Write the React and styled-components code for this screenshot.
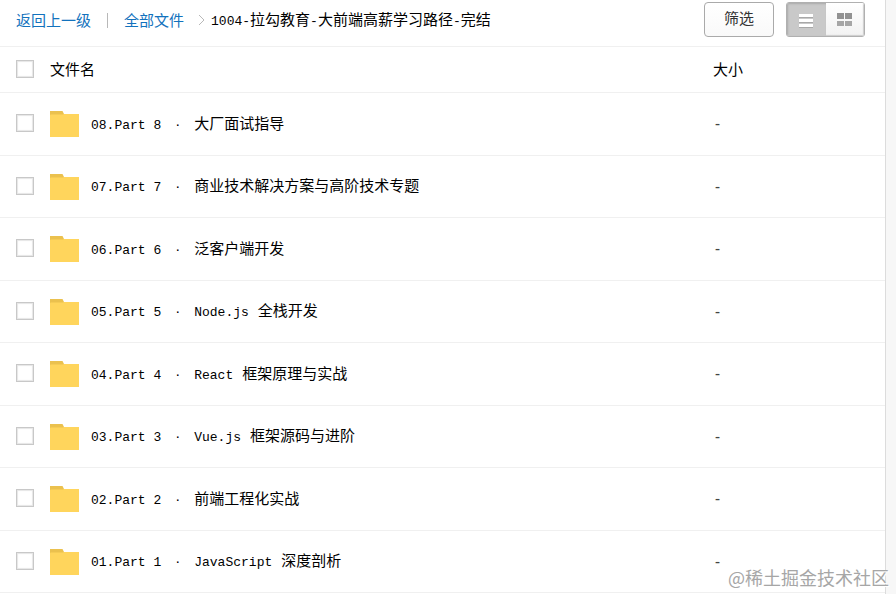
import { useState } from "react";
import styled, { createGlobalStyle } from "styled-components";

const folders = [
  { id: "08.Part 8", title: "大厂面试指导" },
  { id: "07.Part 7", title: "商业技术解决方案与高阶技术专题" },
  { id: "06.Part 6", title: "泛客户端开发" },
  { id: "05.Part 5", tech: "Node.js", title: "全栈开发" },
  { id: "04.Part 4", tech: "React", title: "框架原理与实战" },
  { id: "03.Part 3", tech: "Vue.js", title: "框架源码与进阶" },
  { id: "02.Part 2", title: "前端工程化实战" },
  { id: "01.Part 1", tech: "JavaScript", title: "深度剖析" },
];

const FolderIcon = () => (
  <svg width="30" height="28" viewBox="0 0 30 28" aria-hidden="true">
    <path d="M0 1h12.500l1.500 3v3H0z" fill="#ebc14e" />
    <path d="M0 5.500Q0 4.500 1 4.500h12l1-.5h15v23H0z" fill="#ffd55c" />
  </svg>
);

const App = () => {
  const [view, setView] = useState("list");
  return (
    <>
      <GlobalStyle />
      <Page>
        <Panel>
          <Toolbar>
            <Crumbs aria-label="路径">
              <CrumbLink href="#up">返回上一级</CrumbLink>
              <Divider />
              <CrumbLink href="#all">全部文件</CrumbLink>
              <Arrow viewBox="0 0 8 12" aria-hidden="true">
                <path d="M1 1l5 5-5 5" fill="none" stroke="#b8b8b8" />
              </Arrow>
              <span>
                <Latin>1004-</Latin>拉勾教育<Latin>-</Latin>
                大前端高薪学习路径<Latin>-</Latin>完结
              </span>
            </Crumbs>
            <FilterButton type="button">筛选</FilterButton>
            <ViewSwitch>
              <ViewButton
                type="button"
                aria-label="列表"
                $active={view === "list"}
                onClick={() => setView("list")}
              >
                <svg width="16" height="16" viewBox="0 0 16 16">
                  <path d="M1 4.500h14M1 9.500h14M1 14.500h14" stroke="#a8a8a8" strokeWidth="3" />
                  <path d="M1 3.500h14M1 8.500h14M1 13.500h14" stroke="#fff" strokeWidth="3" />
                </svg>
              </ViewButton>
              <ViewButton
                type="button"
                aria-label="缩略图"
                $active={view === "grid"}
                onClick={() => setView("grid")}
              >
                <svg width="16" height="16" viewBox="0 0 16 16">
                  <path d="M0 1h7v6H0zM8 1h7v6H8z" fill="#929292" />
                  <path d="M0 9h7v5H0zM8 9h7v5H8z" fill="#a6a6a6" />
                </svg>
              </ViewButton>
            </ViewSwitch>
          </Toolbar>
          <FileTable>
            <thead>
              <HeadRow>
                <CheckHead>
                  <Checkbox type="checkbox" aria-label="全选" />
                </CheckHead>
                <Head>文件名</Head>
                <SizeHead>大小</SizeHead>
              </HeadRow>
            </thead>
            <tbody>
              {folders.map(({ id, tech, title }) => (
                <Row key={id}>
                  <CheckCell>
                    <Checkbox type="checkbox" aria-label={id} />
                  </CheckCell>
                  <Cell>
                    <FileLink href="#folder">
                      <FolderIcon />
                      <FileName>
                        <Latin>{id}</Latin>
                        <Dot>·</Dot>
                        {tech && <Tech>{tech}</Tech>}
                        {title}
                      </FileName>
                    </FileLink>
                  </Cell>
                  <SizeCell>-</SizeCell>
                </Row>
              ))}
            </tbody>
          </FileTable>
        </Panel>
        <Watermark>@稀土掘金技术社区</Watermark>
      </Page>
    </>
  );
};

export default App;

const GlobalStyle = createGlobalStyle`
  * {
    box-sizing: border-box;
  }
  body {
    margin: 0;
    color: #000;
    font-family: "Noto Sans CJK SC", sans-serif;
    font-size: 15px;
    line-height: 20px;
  }
  a {
    text-decoration: none;
  }
`;

const Page = styled.div`
  position: relative;
  min-height: 100vh;
  display: flex;
  padding-right: 10px;
  background: #f7f7f7;
`;

const Panel = styled.main`
  flex: 1;
  min-width: 0;
  background: #fff;
  border-right: 1px solid #dcdcdc;
`;

const Toolbar = styled.header`
  display: flex;
  align-items: flex-start;
  height: 47px;
  padding: 2px 20px 0 16px;
  border-bottom: 1px solid #f0f0f0;
`;

const Crumbs = styled.nav`
  flex: 1;
  display: flex;
  align-items: center;
  height: 36px;
  white-space: nowrap;
`;

const CrumbLink = styled.a`
  color: #1272bd;
`;

const Divider = styled.span`
  width: 1px;
  height: 15px;
  margin: 0 16px;
  background: #b8b8b8;
`;

const Arrow = styled.svg`
  width: 8px;
  height: 12px;
  margin: 0 5px 0 14px;
`;

const Latin = styled.span`
  font-family: "Liberation Mono", monospace;
  font-size: 13px;
`;

const FilterButton = styled.button`
  width: 70px;
  height: 35px;
  padding: 0 0 3px;
  border: 1px solid #aaa;
  border-radius: 4px;
  background: linear-gradient(#fff, #f9f9f9);
  color: #333;
  font: inherit;
  cursor: pointer;
`;

const ViewSwitch = styled.div`
  display: flex;
  width: 79px;
  height: 35px;
  margin-left: 12px;
  border: 1px solid #b0b0b0;
  border-radius: 3px;
  overflow: hidden;
`;

const ViewButton = styled.button`
  flex: 1;
  display: flex;
  align-items: center;
  justify-content: center;
  padding: 0;
  border: 0;
  background: ${(props) =>
    props.$active ? "#c9c9c9" : "linear-gradient(#fff, #f2f2f2)"};
  box-shadow: ${(props) =>
    props.$active ? "inset 1px 1px 2px #aaa" : "inset -1px -1px 1px #ccc"};
  cursor: pointer;
`;

const FileTable = styled.table`
  width: 100%;
  table-layout: fixed;
  border-collapse: separate;
  border-spacing: 0;
`;

const Cell = styled.td`
  padding: 0;
  border-bottom: 1px solid #f0f0f0;
`;

const CheckCell = styled(Cell)`
  padding: 0 0 2px 16px;
`;

const SizeCell = styled(Cell)`
  color: #444;
  font-family: "DejaVu Sans Mono", monospace;
`;

const Head = styled.th`
  padding: 0 0 2px;
  border-bottom: 1px solid #f0f0f0;
  font-weight: 400;
  text-align: left;
`;

const CheckHead = styled(Head)`
  width: 50px;
  padding-left: 16px;
`;

const SizeHead = styled(Head)`
  width: 172px;
`;

const HeadRow = styled.tr`
  height: 46px;
`;

const Row = styled.tr`
  height: 62px;
  &:nth-child(odd) {
    height: 63px;
  }
`;

const Checkbox = styled.input`
  appearance: none;
  display: block;
  width: 18px;
  height: 18px;
  margin: 0;
  border: 1px solid #c8c8c8;
  background: #fff;
  box-shadow: inset 0 0 1px 1px #e6e6e6;
  &:checked {
    background: #1272bd;
  }
`;

const FileLink = styled.a`
  display: flex;
  align-items: center;
  gap: 11px;
  color: #000;
`;

const FileName = styled.span`
  white-space: nowrap;
`;

const Dot = styled.span`
  display: inline-block;
  width: 33px;
  font-family: "Liberation Sans", sans-serif;
  text-align: center;
`;

const Tech = styled(Latin)`
  margin-right: 9px;
`;

const Watermark = styled.div`
  position: absolute;
  right: 7px;
  bottom: 5px;
  color: #a6a6a6;
  font-size: 18px;
  line-height: 24px;
  text-shadow: 1px 1px 0 #fff;
`;
